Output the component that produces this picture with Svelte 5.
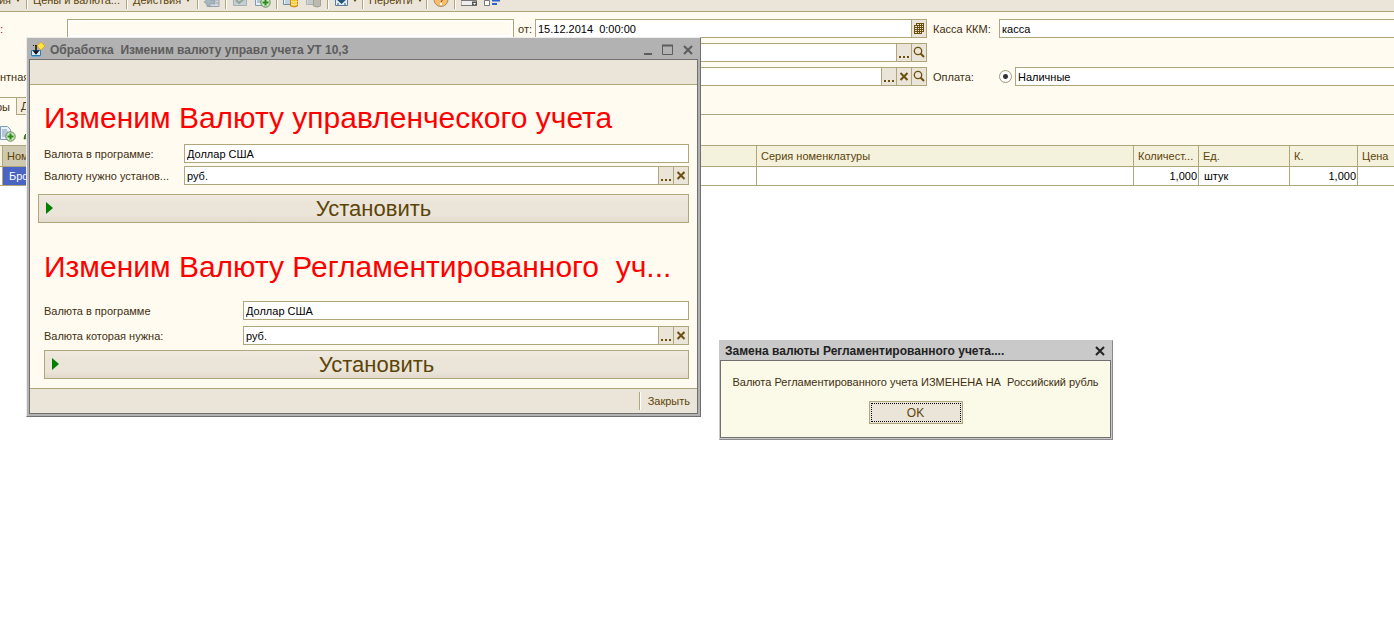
<script>
  let operation = $state('cash');
  const cols = [3, 200, null, 377, 65, 91, 68, 36];
</script>

{#snippet dots()}
  <svg width="14" height="17" viewBox="0 0 14 17" fill="#6b4f0c" shape-rendering="crispEdges"><path d="M2 12h2v2H2zM6 12h2v2H6zM10 12h2v2h-2z" /></svg>
{/snippet}

{#snippet cross()}
  <svg width="14" height="17" viewBox="0 0 14 17" stroke="#6b4f0c" stroke-width="2" fill="none"><path d="M3.500 5l7 7M10.500 5l-7 7" /></svg>
{/snippet}

{#snippet lens()}
  <svg width="14" height="17" viewBox="0 0 14 17" stroke="#6b4f0c" fill="none"><circle cx="6" cy="7" r="3.700" stroke-width="1.300" /><path d="M8.500 9.500l3.500 3.500" stroke-width="2" /></svg>
{/snippet}

{#snippet plusIcon()}
  <svg width="16" height="16" viewBox="0 0 16 16"><path d="M.5.500h7l3 3v10H.5z" fill="#e8f1f8" stroke="#7b9cb8" /><path d="M2 4h5M2 6h6M2 8h6M2 10h4" stroke="#7b9cb8" /><circle cx="10.500" cy="10.500" r="4.700" fill="#cfe8c4" stroke="#5d8a4c" /><path d="M10.500 7.500v6M7.500 10.500h6" stroke="#2f8a1d" stroke-width="2" /></svg>
{/snippet}

{#snippet play()}
  <svg class="play" width="8" height="12" viewBox="0 0 8 12"><path d="M0 0l7 6-7 6z" fill="#008000" /></svg>
{/snippet}

<main>
  <div class="toolbar">
    <button class="t1">Операция<i class="arrow"></i></button>
    <span class="sep"></span>
    <button class="t2">Цены и валюта...</button>
    <span class="sep"></span>
    <button class="t3">Действия<i class="arrow"></i></button>
    <span class="sep"></span>
    <button class="ico" aria-label="Назад"><svg width="16" height="16" viewBox="0 0 16 16"><path d="M3 5.500h12v9H3z" fill="#d3dadd" stroke="#98a4aa" /><path d="M0 10l6-5v3h5v4H6v3z" fill="#a9b7bf" stroke="#8797a0" stroke-width=".6" /><path d="M12 8h3M12 11h3" stroke="#98a4aa" /></svg></button>
    <span class="sep"></span>
    <button class="ico" aria-label="Обновить"><svg width="16" height="16" viewBox="0 0 16 16"><path d="M1.500 1.500h13v12h-13z" fill="#c5ced3" stroke="#a4b1b8" /><path d="M4 8l3 3 5-4M5 6h5" stroke="#92a697" stroke-width="2" fill="none" /></svg></button>
    <button class="ico" aria-label="Ввести на основании">{@render plusIcon()}</button>
    <span class="sep"></span>
    <button class="ico" aria-label="Провести"><svg width="16" height="16" viewBox="0 0 16 16"><path d="M.5.500h12v12H.5z" fill="#f2f6f9" stroke="#6c8ba6" /><path d="M2 9h5M2 11h5" stroke="#8fb0cc" /><path d="M7.500 7v7q4 2 7 0V7z" fill="#f2c63c" stroke="#c48a10" /><path d="M8 9.500q3 1.500 6.500 0M8 12q3 1.500 6.500 0" stroke="#fff0a0" fill="none" /></svg></button>
    <button class="ico" aria-label="Отменить проведение"><svg width="16" height="16" viewBox="0 0 16 16"><path d="M.5.500h12v12H.5z" fill="#d5d6d5" stroke="#acb2b5" /><path d="M2 9h5M2 11h5" stroke="#b4bbc0" /><path d="M7.500 7v7q4 2 7 0V7z" fill="#bcb9ad" stroke="#a4a196" /></svg></button>
    <span class="sep"></span>
    <button class="ico wide" aria-label="Структура"><svg width="16" height="16" viewBox="0 0 16 16"><path d="M1.500 1.500h12v12h-12z" fill="#e4eef7" stroke="#5b7b9a" /><path d="M2 7l5.500 5L13 7h-3V4H5v3z" fill="#24567c" /><path d="M3 12h2M10 12h2" stroke="#24567c" /></svg><i class="arrow"></i></button>
    <span class="sep"></span>
    <button class="t4">Перейти<i class="arrow"></i></button>
    <span class="sep"></span>
    <button class="ico" aria-label="Справка"><svg width="16" height="16" viewBox="0 0 16 16"><circle cx="8" cy="7.500" r="7" fill="#f8bd68" stroke="#a78a68" /><path d="M7 12h2" stroke="#fff" stroke-width="2" /><path d="M8 10l2-3" stroke="#6b451b" /></svg></button>
    <span class="sep"></span>
    <button class="ico" aria-label="Панель"><svg width="16" height="16" viewBox="0 0 16 16"><path d="M0 8.500h15.500v5H0z" fill="#eee" stroke="#777" /><path d="M11 9.500h5v4h-5z" fill="#555" /><path d="M12 11h3l-1.500 2z" fill="#fff" /></svg></button>
    <button class="ico" aria-label="Список"><svg width="16" height="16" viewBox="0 0 16 16"><path d="M.5 8.500h5v5h-5z" fill="#fff" stroke="#777" /><path d="M8 8.500h8M8 12h5" stroke="#2b63cf" stroke-width="2" /></svg></button>
  </div>

  <div class="form">
    <div class="left">
      <div class="row">
        <span class="cap colon">:</span>
        <input class="grow tint" aria-label="Номер" />
        <label class="from" for="date">от:</label>
        <div class="field date"><input id="date" value="15.12.2014  0:00:00" /><button aria-label="Календарь"><svg width="14" height="17" viewBox="0 0 14 17" shape-rendering="crispEdges"><path d="M4 3h8v9H4z" fill="#6b4f0c" /><path d="M2 5h8v9H2z" fill="#6b4f0c" /><path d="M3 6h2v1H3zM6 6h1v1H6zM8 6h1v1H8zM3 8h2v1H3zM6 8h1v1H6zM8 8h1v1H8zM3 10h2v1H3zM6 10h1v1H6zM8 10h1v1H8zM3 12h2v1H3zM6 12h1v1H6zM8 12h1v1H8zM5 4h2v1H5zM8 4h1v1H8zM10 4h1v1h-1zM10 6h1v1h-1zM10 8h1v1h-1zM10 10h1v1h-1z" fill="#ebe4d9" /></svg></button></div>
      </div>
      <div class="row">
        <span class="cap"></span>
        <div class="field"><input aria-label="Организация" /><button aria-label="Выбрать">{@render dots()}</button><button aria-label="Открыть">{@render lens()}</button></div>
      </div>
      <div class="row">
        <span class="cap">нтная</span>
        <div class="field"><input aria-label="Контрагент" /><button aria-label="Выбрать">{@render dots()}</button><button aria-label="Очистить">{@render cross()}</button><button aria-label="Открыть">{@render lens()}</button></div>
      </div>
    </div>
    <div class="right">
      <div class="row"><label for="kkm">Касса ККМ:</label><input id="kkm" class="grow" value="касса" /></div>
      <div class="row"></div>
      <div class="row"><label for="pay">Оплата:</label><input type="radio" name="op" value="cash" bind:group={operation} aria-label="Наличные" /><input id="pay" class="grow" value="Наличные" /></div>
    </div>
  </div>

  <div class="tabs"><button class="tab on">ры</button><button class="tab">Д</button><span class="rest"></span></div>
  <div class="tools"><button class="ico" aria-label="Добавить">{@render plusIcon()}</button><button class="ico" aria-label="Изменить"><svg width="16" height="16" viewBox="0 0 16 16"><path d="M1 13l1-4 8-8 3 3-8 8z" fill="#5d9a4c" stroke="#2f6a1d" /></svg></button></div>

  <table>
    <colgroup>{#each cols as w}<col style={w ? `width:${w}px` : ''} />{/each}</colgroup>
    <thead><tr><th></th><th class="cur">Ном</th><th></th><th>Серия номенклатуры</th><th>Количест...</th><th>Ед.</th><th>К.</th><th>Цена</th></tr></thead>
    <tbody><tr><td></td><td class="pick"><span class="sel">Брс</span></td><td></td><td></td><td class="num">1,000</td><td>штук</td><td class="num">1,000</td><td></td></tr></tbody>
  </table>

  <section class="win">
    <header>
      <svg width="16" height="16" viewBox="0 0 16 16"><path d="M1.500 8.500h9v5h-9z" fill="#d6ecfa" stroke="#2f79ad" /><path d="M2 14.500h8" stroke="#6aa9d2" /><path d="M6 3v8M3.500 8.500L6 11.500l2.500-3" stroke="#111" stroke-width="1.500" fill="none" /><path d="M3 3.500h3" stroke="#111" stroke-dasharray="1 1" /><path d="M11 0l4 4-4 4-4-4z" fill="#ffe23f" stroke="#d79b1b" stroke-width=".7" /></svg>
      <h2>Обработка  Изменим валюту управл учета УТ 10,3</h2>
      <button aria-label="Свернуть"><svg width="12" height="12" viewBox="0 0 12 12"><path d="M2 10h8" stroke="#5c5c5c" stroke-width="2" /></svg></button>
      <button aria-label="Развернуть"><svg width="12" height="12" viewBox="0 0 12 12"><path d="M.5 1.500h10v9H.5z" fill="none" stroke="#5c5c5c" /><path d="M0 1.500h11" stroke="#5c5c5c" stroke-width="2" /></svg></button>
      <button aria-label="Закрыть окно"><svg width="12" height="12" viewBox="0 0 12 12"><path d="M2 2l8 8M10 2l-8 8" stroke="#5c5c5c" stroke-width="2" /></svg></button>
    </header>
    <div class="inner">
      <div class="strip"></div>
      <div class="body">
        <h1>Изменим Валюту управленческого учета</h1>
        <div class="line"><label for="a1">Валюта в программе:</label><div class="field"><input id="a1" value="Доллар США" /></div></div>
        <div class="line near"><label for="a2">Валюту нужно установ...</label><div class="field"><input id="a2" value="руб." /><button aria-label="Выбрать">{@render dots()}</button><button aria-label="Очистить">{@render cross()}</button></div></div>
        <button class="set first">{@render play()}Установить</button>
        <h1 class="second">Изменим Валюту Регламентированного  уч...</h1>
        <div class="line long"><label for="b1">Валюта в программе</label><div class="field"><input id="b1" value="Доллар США" /></div></div>
        <div class="line long far"><label for="b2">Валюта которая нужна:</label><div class="field"><input id="b2" value="руб." /><button aria-label="Выбрать">{@render dots()}</button><button aria-label="Очистить">{@render cross()}</button></div></div>
        <button class="set">{@render play()}Установить</button>
      </div>
      <footer><span class="sep"></span><button>Закрыть</button></footer>
    </div>
  </section>

  <section class="msg">
    <header>
      <h2>Замена валюты Регламентированного учета....</h2>
      <button aria-label="Закрыть сообщение"><svg width="12" height="12" viewBox="0 0 12 12"><path d="M2 2l8 8M10 2l-8 8" stroke="#222" stroke-width="2" /></svg></button>
    </header>
    <div class="inner">
      <p>Валюта Регламентированного учета ИЗМЕНЕНА НА  Российский рубль</p>
      <button class="ok"><span>OK</span></button>
    </div>
  </section>
</main>

<style>
  :global(body) { background: #fff; }
  main { position: relative; min-height: 100vh; overflow: hidden; font: 11px/16px "Liberation Sans", Arial, sans-serif; color: #3f3011; }
  main * { box-sizing: border-box; }
  button, input { margin: 0; font: inherit; color: inherit; border-radius: 0; }
  button { display: flex; align-items: center; padding: 0; border: 0; background: none; white-space: pre; }
  svg { display: block; flex: none; }
  h1, h2, p { margin: 0; white-space: pre; }
  label { white-space: nowrap; }

  .toolbar { display: flex; align-items: center; height: 23px; margin-top: -11px; background: #ebe4d9; border-bottom: 1px solid #b0a67c; color: #5c4408; }
  .sep { width: 2px; height: 18px; margin-right: 5px; flex: none; background: linear-gradient(90deg, #b0a67c 50%, #fff 50%); }
  .arrow { width: 0; height: 0; margin-left: 5px; border: 2px solid transparent; border-top: 3px solid #5c4408; border-bottom: 0; }
  .t1 { width: 26px; justify-content: flex-end; padding-right: 6px; }
  .t2 { width: 93px; }
  .t3 { width: 64px; }
  .t4 { width: 57px; }
  .ico { width: 21px; flex: none; }
  .ico + .ico { margin-left: 2px; }
  .wide { width: 28px; }
  .wide .arrow { margin-left: 3px; }

  .form { display: flex; gap: 6px; padding: 7px 0 11px; background: #fffbf0; }
  .left { width: 927px; flex: none; display: flex; flex-direction: column; gap: 5px; }
  .right { flex: 1; margin-right: -2px; display: flex; flex-direction: column; gap: 5px; }
  .row { display: flex; align-items: center; height: 19px; }
  .cap { width: 67px; flex: none; }
  .colon { color: #7a2060; }
  .right label { width: 66px; flex: none; }
  input { height: 19px; min-width: 0; padding: 0 2px; border: 1px solid #b0a67c; background: #fff; color: #000; outline: 0; white-space: pre; }
  .grow { flex: 1; }
  .tint { background: #fffbf0; border-width: 1px; box-shadow: inset 0 0 0 2px #fff; }
  .from { width: 21px; padding-left: 4px; flex: none; }
  .field { display: flex; flex: 1; height: 19px; border: 1px solid #b0a67c; background: #fff; }
  .field input { flex: 1; height: 17px; border: 0; }
  .field button { width: 15px; background: #ebe4d9; border-left: 1px solid #b0a67c; }
  .date { flex: 0 0 392px; }
  input[type="radio"] { appearance: none; width: 13px; height: 13px; margin-right: 3px; padding: 0; flex: none; border: 1px solid #a39a75; border-radius: 50%; background: radial-gradient(circle, #333 0 2px, #fff 3px); }

  .tabs { display: flex; height: 18px; background: #fffbf0; }
  .tab { width: 17px; border: 1px solid #b0a67c; border-left: 0; background: #f4eee0; }
  .tab + .tab { padding-left: 4px; }
  .tab.on { border-bottom: 0; background: #fffbf0; margin-left: -4px; width: 21px; }
  .rest { flex: 1; border-bottom: 1px solid #b0a67c; }
  .tools { display: flex; align-items: center; height: 30px; padding-top: 7px; background: #fffbf0; }

  table { width: 100%; table-layout: fixed; border-collapse: separate; border-spacing: 0; border-top: 1px solid #b0a67c; }
  th, td { padding: 0 4px; height: 21px; border-right: 1px solid #b0a67c; border-bottom: 1px solid #b0a67c; text-align: left; font-weight: 400; white-space: nowrap; overflow: hidden; }
  th { background: #f4f1dc; color: #5c4408; }
  td { height: 19px; padding: 0 5px; background: #fff; color: #000; line-height: 18px; }
  th:first-child, td:first-child { padding: 0; }
  th:last-child, td:last-child { border-right: 0; }
  .cur { background: #cfc9b2; }
  .pick { padding: 0; }
  .sel { display: block; padding-left: 6px; background: #4a64c4; color: #fff; }
  .num { padding: 0 1px; text-align: right; }

  section { position: absolute; background: #b2b2b2; border: 1px solid #ececec; border-right-color: #707070; border-bottom-color: #707070; padding: 0 2px 2px; }
  header { display: flex; align-items: center; height: 21px; }
  h2 { flex: 1; font-size: 12px; line-height: 16px; font-weight: 700; }
  .inner { border: 1px solid #707070; background: #fffbf0; }

  .win { left: 26px; top: 37px; width: 675px; }
  .win header { gap: 8px; padding: 2px 4px 0 1px; color: #5c5c5c; }
  .win h2 { margin-left: -4px; }
  .strip { height: 25px; background: #ebe4d9; border-bottom: 1px solid #b0a67c; }
  .body { padding: 10px 8px 9px 14px; }
  h1 { height: 49px; font-size: 30px; line-height: 45px; font-weight: 400; color: #f00; }
  h1.second { height: 78px; padding-top: 21px; }
  .line { display: flex; align-items: center; }
  .line label { width: 140px; flex: none; }
  .line.long label { width: 199px; }
  .near { margin-top: 3px; }
  .far { margin-top: 6px; }
  .set { position: relative; display: flex; justify-content: center; width: 100%; height: 29px; margin-top: 5px; padding-left: 20px; border: 1px solid #b0a67c; background: linear-gradient(#f0eae0, #ebe4d9 30%, #ebe4d9 75%, #e2dacb); font-size: 22px; line-height: 24px; color: #5c4408; }
  .set.first { width: auto; min-width: calc(100% + 6px); margin: 9px 0 0 -6px; }
  .play { position: absolute; left: 7px; top: 7px; }
  footer { display: flex; justify-content: flex-end; align-items: center; height: 25px; padding-right: 7px; border-top: 1px solid #b0a67c; background: #ebe4d9; color: #5c4408; }
  footer button { padding-left: 2px; }

  .msg { left: 719px; top: 340px; width: 394px; background: #c9c9c9; border-color: #c9c9c9 #8a8a8a #8a8a8a #c9c9c9; padding: 0 1px 1px 0; }
  .msg header { height: 19px; padding: 0 5px; color: #222; }
  .msg .inner { display: flex; flex-direction: column; align-items: center; gap: 11px; padding: 13px 10px 13px; background: #fbf9e8; }
  .ok { width: 94px; height: 23px; padding: 1px; border: 1px solid #b0a67c; background: #ebe4d9; font-size: 12px; color: #5c4408; }
  .ok span { flex: 1; height: 19px; line-height: 18px; border: 1px dotted #000; }
</style>
